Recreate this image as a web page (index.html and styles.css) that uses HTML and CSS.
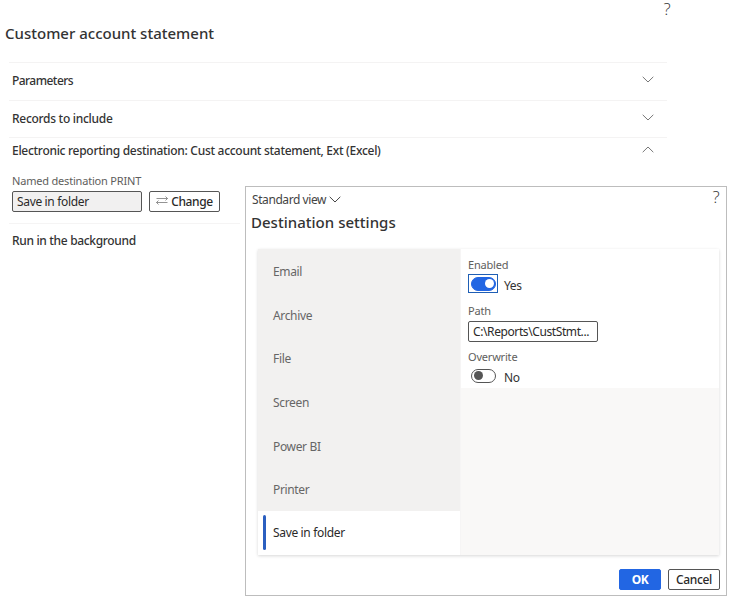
FILE: index.html
```html
<!DOCTYPE html>
<html lang="en">
<head>
<meta charset="utf-8">
<title>Customer account statement</title>
<link rel="stylesheet" href="styles.css">
</head>
<body>
<main class="page">
  <header class="page-head"><span class="help">?</span></header>
  <h1 class="title"><span>Customer account statement</span></h1>
  <section class="tab"><h2 class="t-param">Parameters</h2><svg class="chev" viewBox="0 0 12 7"><path d="M.7.8 6 6 11.3.8"/></svg></section>
  <section class="tab second"><h2 class="t-rec">Records to include</h2><svg class="chev" viewBox="0 0 12 7"><path d="M.7.8 6 6 11.3.8"/></svg></section>
  <section class="tab open"><h2 class="t-er">Electronic reporting destination: Cust account statement, Ext (Excel)</h2><svg class="chev" viewBox="0 0 12 7"><path d="M.7 6.2 6 1l5.3 5.2"/></svg></section>
  <div class="named">
    <label class="label t-named">Named destination PRINT</label>
    <div class="row">
      <div class="input readonly">Save in folder</div>
      <button class="btn change"><svg class="swap" viewBox="0 0 12 9"><path d="M.5 2.5h11M9.5.5l2 2-2 2M11.5 6.5H.5M2.5 4.5l-2 2 2 2"/></svg><span>Change</span></button>
    </div>
  </div>
  <section class="background"><h2 class="t-run">Run in the background</h2></section>
</main>

<div class="dialog" role="dialog">
  <div class="dialog-top">
    <span class="view"><span>Standard view</span><svg class="chev dark" viewBox="0 0 12 7"><path d="M.7.8 6 6 11.3.8"/></svg></span>
    <span class="help">?</span>
  </div>
  <h1 class="dialog-title">Destination settings</h1>
  <div class="panel">
    <nav class="nav">
      <a>Email</a><a>Archive</a><a>File</a><a>Screen</a><a>Power BI</a><a>Printer</a><a class="active">Save in folder</a>
    </nav>
    <div class="content">
      <div class="fields">
        <label class="label">Enabled</label>
        <div class="toggle-row"><span class="focus"><span class="toggle on"></span></span><span class="state">Yes</span></div>
        <label class="label path">Path</label>
        <div class="input">C:\Reports\CustStmt...</div>
        <label class="label over">Overwrite</label>
        <div class="toggle-row"><span class="focus none"><span class="toggle"></span></span><span class="state">No</span></div>
      </div>
    </div>
  </div>
  <footer class="actions"><button class="btn primary"><span>OK</span></button><button class="btn cancel"><span>Cancel</span></button></footer>
</div>
</body>
</html>
```
FILE: styles.css
```css
* { box-sizing: border-box; }
body {
  margin: 0;
  width: 734px;
  height: 603px;
  overflow: hidden;
  background: #fff;
  color: #2b2a29;
  font: 12px/16px "Noto Sans", "Open Sans", sans-serif;
  letter-spacing: -.34px;
  white-space: nowrap;
}
h1, h2 { margin: 0; font-weight: 500; color: #333; }
.page { width: 667px; padding-left: 9px; }
.page-head { height: 22px; display: flex; justify-content: flex-end; margin-right: -6px; }
.help { width: 12px; height: 22px; text-align: center; font: 300 17px/18px "Open Sans", sans-serif; letter-spacing: 0; color: #333; }
.title { height: 40px; margin-left: -4px; padding-top: 1px; font-size: 15px; line-height: 21px; letter-spacing: 0; }
.tab {
  height: 38px;
  padding: 2px 13px 4px 3px;
  border-top: 1px solid #f4f3f3;
  display: flex;
  align-items: center;
  justify-content: space-between;
}
.tab.second { height: 37px; padding-bottom: 3px; }
.tab.open { height: 36px; padding: 5px 13px 0 3px; align-items: flex-start; }
h2 { font-size: 12px; line-height: 16px; letter-spacing: -.29px; }
.t-param { letter-spacing: -.55px; }
.t-run { letter-spacing: -.33px; }
.chev { width: 12px; height: 7px; fill: none; stroke: #777; stroke-width: 1; }
.tab .chev { margin-top: -3px; }
.tab.open .chev { margin-top: 3px; }
.named { height: 50px; padding-left: 3px; }
.label { display: block; height: 16px; font-size: 11px; line-height: 16px; color: #605e5c; letter-spacing: -.19px; }
.row { display: flex; gap: 7px; padding-top: 2px; }
.input { width: 130px; height: 21px; padding: 0 4px; border: 1px solid #555; border-radius: 2px; line-height: 20px; background: #fff; }
.path + .input { margin-top: 2px; letter-spacing: -.4px; }
.readonly { background: #f1f0f0; }
.btn { height: 21px; padding: 0 6px; border: 1px solid #555; border-radius: 2px; background: #fff; color: #2b2a29; font: 500 12px/19px "Noto Sans", sans-serif; letter-spacing: -.36px; display: flex; align-items: center; justify-content: center; }
.change { width: 71px; gap: 3px; }
.swap { flex: none; width: 12px; height: 9px; margin-top: -2px; fill: none; stroke: #777; stroke-width: .8; }
.background { width: 231px; height: 38px; border-top: 1px solid #f5f4f4; padding: 9px 0 0 3px; }

.dialog { position: absolute; left: 245px; top: 186px; width: 482px; height: 410px; border: 1px solid #bdbdbd; background: #fff; }
.dialog-top { height: 24px; padding: 1px 4px 0 6px; display: flex; justify-content: space-between; }
.view { display: flex; gap: 3px; padding-top: 4px; letter-spacing: -.42px; color: #444; }
.view .chev { margin-top: 4px; }
.chev.dark { stroke: #444; }
.dialog-title { padding-left: 5px; height: 38px; font-size: 15px; line-height: 22px; letter-spacing: .02px; }
.panel { display: flex; width: 461px; height: 306px; margin-left: 12px; background: #f9f8f7; box-shadow: 0 1px 3px rgba(0,0,0,.16); }
.nav { width: 202px; background: #f2f1f0; display: flex; flex-direction: column; }
.nav a { height: 43.7px; padding: 0 0 0 15px; line-height: 45px; color: #666; }
.nav .active { position: relative; background: #fff; color: #2b2a29; line-height: 44px; }
.active::before { content: ""; position: absolute; left: 5px; top: 4px; width: 3px; height: 35px; border-radius: 1.5px; background: #2b5fc0; }
.content { flex: 1; border-left: 1px solid #f6f5f5; }
.fields { height: 139px; padding: 8px 0 0 7px; background: #fff; }
.toggle-row { display: flex; height: 22px; }
.focus { width: 30px; height: 19px; margin-top: 1px; padding: 1.5px 2px; border: 1px solid #1f5fb5; }
.none { border-color: transparent; }
.toggle { display: block; position: relative; width: 25px; height: 14px; border: 1px solid #555; border-radius: 7px; }
.toggle::after { content: ""; position: absolute; width: 9px; height: 9px; left: 2px; top: 1.5px; border-radius: 50%; background: #555; }
.toggle.on { border-color: #2266e3; background: #2266e3; }
.on::after { left: 13px; background: #fff; }
.state { margin-left: 6px; padding-top: 5px; color: #333; }
.path { margin-top: 8px; }
.over { margin-top: 7px; }
.actions { display: flex; justify-content: flex-end; gap: 7px; padding: 14px 6px 0 0; }
.primary { width: 42px; border-color: #2266e3; background: #2266e3; color: #fff; font-weight: 700; }
.cancel { width: 52px; }
```
